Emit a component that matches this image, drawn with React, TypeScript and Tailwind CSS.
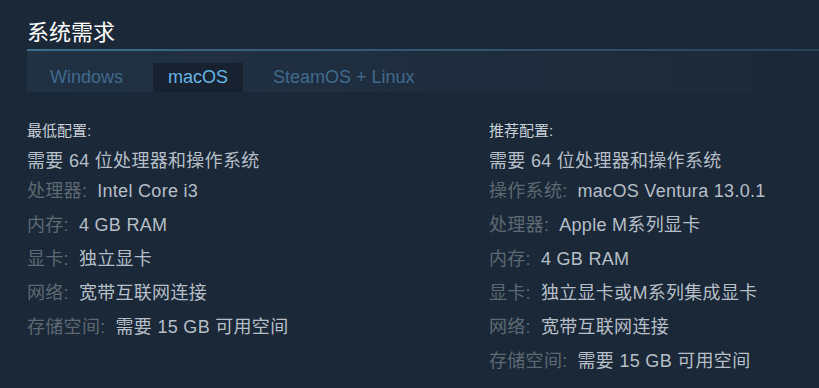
import React from 'react';

const cjk = "'Liberation Sans', 'Noto Sans CJK SC', sans-serif";

type Row = { label?: string; value: string };

const minimum: Row[] = [
  { value: '需要 64 位处理器和操作系统' },
  { label: '处理器:', value: 'Intel Core i3' },
  { label: '内存:', value: '4 GB RAM' },
  { label: '显卡:', value: '独立显卡' },
  { label: '网络:', value: '宽带互联网连接' },
  { label: '存储空间:', value: '需要 15 GB 可用空间' },
];

const recommended: Row[] = [
  { value: '需要 64 位处理器和操作系统' },
  { label: '操作系统:', value: 'macOS Ventura 13.0.1' },
  { label: '处理器:', value: 'Apple M系列显卡' },
  { label: '内存:', value: '4 GB RAM' },
  { label: '显卡:', value: '独立显卡或M系列集成显卡' },
  { label: '网络:', value: '宽带互联网连接' },
  { label: '存储空间:', value: '需要 15 GB 可用空间' },
];

const tabs = ['Windows', 'macOS', 'SteamOS + Linux'];

const ReqColumn: React.FC<{ title: string; rows: Row[] }> = ({ title, rows }) => (
  <div>
    <div className="text-[15px] leading-[20px] text-[#c7d0d7]">{title}</div>
    <ul className="mt-[5px]">
      {rows.map((r, i) => (
        <li
          key={i}
          className={`text-[18px] leading-[30px] tracking-[0.3px] whitespace-nowrap ${i > 1 ? 'mt-[4px]' : ''}`}
        >
          {r.label && <span className="text-[#5d6872]">{r.label}</span>}
          <span className={`text-[#b6bfc7] ${r.label ? 'ml-[10px]' : ''}`}>{r.value}</span>
        </li>
      ))}
    </ul>
  </div>
);

const App: React.FC = () => {
  return (
    <div
      className="w-[819px] h-[388px] bg-[#1b2838] overflow-hidden pt-[19px] pl-[27px]"
      style={{ fontFamily: cjk }}
    >
      {/* Header */}
      <h2 className="text-[22px] leading-[28px] text-white font-normal">系统需求</h2>
      <div className="mt-[2px] h-[2px] bg-gradient-to-r from-[#3d6c8d] to-[#2a4357]" />

      {/* OS tabs */}
      <div className="h-[41px] w-[725px] flex items-end gap-[15px] pl-[8px] bg-gradient-to-r from-[#203144] to-[#1d2a3a]">
        {tabs.map((t) => (
          <div
            key={t}
            className={`h-[29px] px-[15px] text-[18px] leading-[29px] ${
              t === 'macOS' ? 'bg-[#172130] text-[#66b4e3]' : 'text-[#416a8d]'
            }`}
          >
            {t}
          </div>
        ))}
      </div>

      {/* Requirements */}
      <div className="mt-[29px] grid grid-cols-[462px_1fr]">
        <ReqColumn title="最低配置:" rows={minimum} />
        <ReqColumn title="推荐配置:" rows={recommended} />
      </div>
    </div>
  );
};

export default App;
